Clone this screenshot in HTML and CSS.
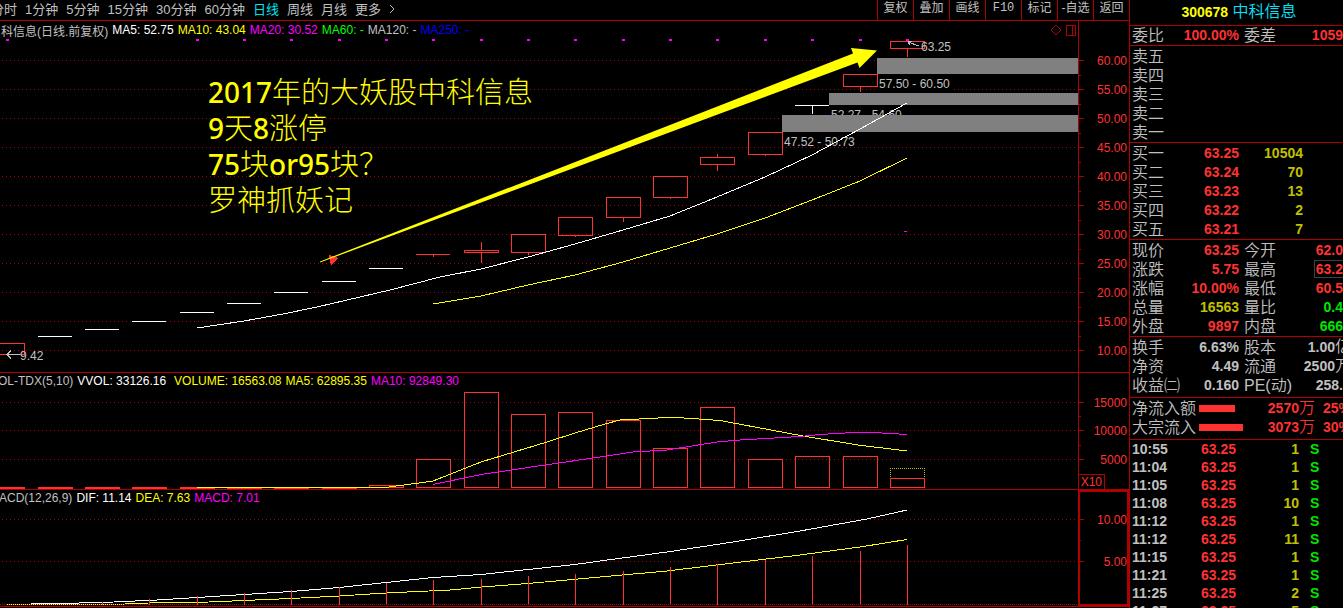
FILE: index.html
```html
<!DOCTYPE html>
<html lang="zh-CN">
<head>
<meta charset="utf-8">
<title>300678 中科信息</title>
<link rel="stylesheet" href="styles.css">
</head>
<body>
<div class="terminal">
  <main class="charts">
    <header class="toolbar">
      <nav class="periods">
        <button>分时</button><button>1分钟</button><button>5分钟</button><button>15分钟</button><button>30分钟</button><button>60分钟</button><button class="active">日线</button><button>周线</button><button>月线</button><button class="more">更多 <svg class="chevron" width="6" height="10"><path d="M1 1l4 4-4 4"/></svg></button>
      </nav>
      <div class="actions">
        <button>复权</button><button>叠加</button><button>画线</button><button class="mono">F10</button><button>标记</button><button>-自选</button><button>返回</button>
      </div>
    </header>

    <section class="pane">
      <div class="plot">
        <div class="legend legend-main">
          <span>科信息(日线.前复权)</span><span class="white">MA5: 52.75</span><span class="yellow">MA10: 43.04</span><span class="magenta">MA20: 30.52</span><span class="green">MA60: -</span><span>MA120: -</span><span class="blue">MA250: -</span>
          <svg class="marks" width="27" height="14"><path d="M1 7l5-5 5 5-5 5z"/><path class="crisp" d="M16.500 2.500h9v10h-9zM22.500 2.500v10"/></svg>
        </div>
        <svg class="canvas" width="100%" height="333">
          <g transform="translate(0 -39)">
            <path class="grid" d="M2 60.500H1078M2 89.500H878M954 89.500H1078M2 118.500H1078M2 147.500H1078M2 176.500H1078M2 205.500H1078M2 234.500H1078M2 263.500H1078M2 292.500H1078M2 321.500H1078M2 350.500H1078"/>
            <path class="flat" d="M38 336.500h34M85 329.500h34M132 321.500h34M180 312.500h34M227 303.500h34M274 292.500h34M322 281.500h34M369 268.500h34M795 105.500h34M812.500 106v8"/>
            <path class="candle" d="M-1 343.500H24.500V354.500H-1M416 254.500h34M433.500 254v3M464.500 250.500h34v2h-34zM481.500 242v8M481.500 253v10M511.500 234.500h34v18h-34zM528.500 253v2M558.500 217.500h34v18h-34zM575.500 236v1M606.500 197.500h34v20h-34zM623.500 218v4M653.500 176.500h34v21h-34zM670.500 198v1M700.500 157.500h34v7h-34zM717.500 154v3M717.500 165v6M748.500 132.500h34v22h-34zM765.500 155v1M843.500 74.500h34v12h-34zM860.500 87v5M890.500 41.500h34v7h-34zM907.500 49v8"/>
            <g class="note">
              <text x="20" y="360">9.42</text>
              <text x="921" y="51">63.25</text>
              <text x="879" y="88">57.50 - 60.50</text>
              <text x="831" y="119">52.27 - 54.60</text>
              <text x="784" y="146">47.52 - 50.73</text>
            </g>
            <path class="pointer" d="M7 354.500H20M11 350.500L7 354.500l4 4M908 42l11 4M912 41l-4 1 2 3"/>
            <path class="gap" d="M877 58H3000V74H877zM829 93H3000V105H829zM782 115H3000V132H782z"/>
            <polyline class="line white" points="197,328 244,321 283,314 317,307 360,297 390,290 440,277 481,269 528,257 575,244 623,230 670,216 717,197 765,177 812,155 860,129 907,103"/>
            <polyline class="line yellow" points="433,304 481,296 528,285 575,275 623,262 670,248 717,234 765,218 812,200 860,181 907,158"/>
            <path class="line magenta" d="M904 231.500h3"/>
            <path class="dots" d="M6 39h3v2h-3zM196 39h3v2h-3zM243 39h3v2h-3zM290 39h3v2h-3zM338 39h3v2h-3zM385 39h3v2h-3zM432 39h3v2h-3zM480 39h3v2h-3zM527 39h3v2h-3zM574 39h3v2h-3zM622 39h3v2h-3zM669 39h3v2h-3zM716 39h3v2h-3zM764 39h3v2h-3zM811 39h3v2h-3zM859 39h3v2h-3zM906 39h3v2h-3z"/>
            <path class="flag" d="M329 255l9 3-7 7z"/>
            <path class="arrow" d="M320 261.500L853 53.500 851 48 877 50.500 859.500 68 857.500 62.500 320 262.500z"/>
          </g>
        </svg>
        <div class="annotation">
          <p><b>2017</b>年的大妖股中科信息</p>
          <p><b>9</b>天<b>8</b>涨停</p>
          <p><b>75</b>块<b>or95</b>块？</p>
          <p>罗神抓妖记</p>
        </div>
      </div>
      <svg class="axis" width="50" height="351">
        <path class="tick" d="M0 39.500h5M0 68.500h5M0 97.500h5M0 126.500h5M0 155.500h5M0 184.500h5M0 213.500h5M0 242.500h5M0 271.500h5M0 300.500h5M0 329.500h5M0 54.500h2M0 83.500h2M0 112.500h2M0 141.500h2M0 170.500h2M0 199.500h2M0 228.500h2M0 257.500h2M0 286.500h2M0 315.500h2"/>
        <g class="scale">
          <text x="48" y="44">60.00</text><text x="48" y="73">55.00</text><text x="48" y="102">50.00</text><text x="48" y="131">45.00</text><text x="48" y="160">40.00</text><text x="48" y="189">35.00</text><text x="48" y="218">30.00</text><text x="48" y="247">25.00</text><text x="48" y="276">20.00</text><text x="48" y="305">15.00</text><text x="48" y="334">10.00</text>
        </g>
      </svg>
    </section>

    <section class="pane">
      <div class="plot">
        <div class="legend legend-volume">
          <span>VOL-TDX(5,10)</span><span class="white wide">VVOL: 33126.16</span><span class="yellow">VOLUME: 16563.08</span><span class="yellow">MA5: 62895.35</span><span class="magenta">MA10: 92849.30</span>
        </div>
        <svg class="canvas" width="100%" height="100">
          <g transform="translate(0 -389)">
            <path class="grid" d="M2 402.500H1078M2 430.500H1078M2 459.500H1078"/>
            <path class="bars" d="M416.500 459.500h34v28h-34zM464.500 392.500h34v95h-34zM511.500 414.500h34v73h-34zM558.500 412.500h34v75h-34zM606.500 420.500h34v67h-34zM653.500 448.500h34v39h-34zM700.500 407.500h34v80h-34zM748.500 459.500h34v28h-34zM795.500 456.500h34v31h-34zM843.500 456.500h34v31h-34zM890.500 478.500h34v9h-34zM369.500 485.500h34v2h-34z"/>
            <path class="stub" d="M0 488H25M38 488h35M85 488h35M132 488h35M180 488h35M227 488h35M274 488h35M322 488h35"/>
            <path class="estimate" d="M890.500 477V468.500H924.500V478"/>
            <polyline class="line yellow" points="197,487.500 385,487.500 415,483.500 433,481 481,462 547,442 575,433 605,424 620,420 658,418 677,417.500 720,420.500 803,436 858,445 907,451"/>
            <polyline class="line magenta" points="433,484.500 481,474.500 545,465 607,456 633,452 667,450 717,442 740,440 800,436.500 820,434.500 853,432.500 873,432.500 907,434.500"/>
          </g>
        </svg>
      </div>
      <svg class="axis" width="50" height="116">
        <path class="tick" d="M0 29.500h5M0 57.500h5M0 86.500h5M0 43.500h2M0 72.500h2M0 101.500H25.500V116"/>
        <g class="scale">
          <text x="48" y="34">15000</text><text x="48" y="62">10000</text><text x="48" y="91">5000</text><text x="23" y="113">X10</text>
        </g>
      </svg>
    </section>

    <section class="pane">
      <div class="plot">
        <div class="legend legend-macd">
          <span>MACD(12,26,9)</span><span class="white">DIF: 11.14</span><span class="yellow">DEA: 7.63</span><span class="magenta">MACD: 7.01</span>
        </div>
        <svg class="canvas" width="100%" height="100">
          <g transform="translate(0 -506)">
            <path class="grid" d="M2 519.500H1078M2 561.500H1078"/>
            <path class="grid zero" d="M0 604.500H1078"/>
            <polyline class="line white" points="31,603.500 79,603 114,602 157,600 197,597.500 244,594.500 291,591.500 339,587.500 386,582.500 433,577.500 481,574.500 528,569.500 575,564.500 600,561 667,552 733,542 800,531 867,519 907,510"/>
            <polyline class="line yellow" points="125,603.500 173,602.500 209,602 244,600.500 291,598.500 339,596 386,593 450,590 482,587 528,583.500 600,577 667,571 733,563 800,555 860,547 907,539.500"/>
            <path class="line yellow lead" d="M7 604.500H125"/>
            <path class="candle" d="M102.500 602v3M149.500 599v6M197.500 596v9M244.500 593v12M291.500 590v15M339.500 587v18M386.500 583v21M433.500 580v25M481.500 579v26M528.500 576v28M575.500 574v31M623.500 571v34M670.500 567v37M717.500 564v41M765.500 560v45M812.500 556v48M860.500 551v53M907.500 545v60"/>
          </g>
        </svg>
      </div>
      <svg class="axis selected" width="50" height="116">
        <path class="tick" d="M0 27.500h4M0 48.500h1M0 69.500h4"/>
        <g class="scale">
          <text x="47" y="32">10.00</text><text x="47" y="74">5.00</text>
        </g>
      </svg>
    </section>
  </main>

  <aside class="quote">
    <h1><b>300678</b> 中科信息</h1>

    <table class="pairs">
      <colgroup><col class="c-label"><col class="c-value"><col class="c-label2"><col></colgroup>
      <tr><th>委比</th><td class="red">100.00%</td><th>委差</th><td class="red">1059</td></tr>
    </table>

    <table class="book">
      <colgroup><col class="c-label"><col class="c-value"><col class="c-volume"><col></colgroup>
      <tr><th>卖五</th><td></td><td></td><td></td></tr>
      <tr><th>卖四</th><td></td><td></td><td></td></tr>
      <tr><th>卖三</th><td></td><td></td><td></td></tr>
      <tr><th>卖二</th><td></td><td></td><td></td></tr>
      <tr><th>卖一</th><td></td><td></td><td></td></tr>
    </table>

    <table class="book">
      <colgroup><col class="c-label"><col class="c-value"><col class="c-volume"><col></colgroup>
      <tr><th>买一</th><td class="red">63.25</td><td class="gold">10504</td><td></td></tr>
      <tr><th>买二</th><td class="red">63.24</td><td class="gold">70</td><td></td></tr>
      <tr><th>买三</th><td class="red">63.23</td><td class="gold">13</td><td></td></tr>
      <tr><th>买四</th><td class="red">63.22</td><td class="gold">2</td><td></td></tr>
      <tr><th>买五</th><td class="red">63.21</td><td class="gold">7</td><td></td></tr>
    </table>

    <table class="pairs">
      <colgroup><col class="c-label"><col class="c-value"><col class="c-label2"><col></colgroup>
      <tr><th>现价</th><td class="red">63.25</td><th>今开</th><td class="red">62.0</td></tr>
      <tr><th>涨跌</th><td class="red">5.75</td><th>最高</th><td class="red"><span class="boxed">63.2</span></td></tr>
      <tr><th>涨幅</th><td class="red">10.00%</td><th>最低</th><td class="red">60.5</td></tr>
      <tr><th>总量</th><td class="gold">16563</td><th>量比</th><td class="lime">0.4</td></tr>
      <tr><th>外盘</th><td class="red">9897</td><th>内盘</th><td class="lime">666</td></tr>
    </table>

    <table class="pairs shares">
      <colgroup><col class="c-label"><col class="c-value"><col class="c-label2"><col></colgroup>
      <tr><th>换手</th><td>6.63%</td><th>股本</th><td><span class="cut">1.00<i>亿</i></span></td></tr>
      <tr><th>净资</th><td>4.49</td><th>流通</th><td><span class="cut">2500<i>万</i></span></td></tr>
      <tr><th>收益㈡</th><td>0.160</td><th>PE(动)</th><td>258.</td></tr>
    </table>

    <table class="flows">
      <colgroup><col class="c-flow"><col class="c-bar"><col class="c-amount"><col></colgroup>
      <tr><th>净流入额</th><td><div class="bar" style="width:36px"></div></td><td class="red">2570<i>万</i></td><td class="red"><span class="cut">25%</span></td></tr>
      <tr><th>大宗流入</th><td><div class="bar" style="width:44px"></div></td><td class="red">3073<i>万</i></td><td class="red"><span class="cut">30%</span></td></tr>
    </table>

    <table class="trades">
      <colgroup><col class="c-time"><col class="c-price"><col class="c-lots"><col></colgroup>
      <tr><th>10:55</th><td class="red">63.25</td><td class="gold">1</td><td class="side">S</td></tr>
      <tr><th>11:04</th><td class="red">63.25</td><td class="gold">1</td><td class="side">S</td></tr>
      <tr><th>11:05</th><td class="red">63.25</td><td class="gold">1</td><td class="side">S</td></tr>
      <tr><th>11:08</th><td class="red">63.25</td><td class="gold">10</td><td class="side">S</td></tr>
      <tr><th>11:12</th><td class="red">63.25</td><td class="gold">1</td><td class="side">S</td></tr>
      <tr><th>11:12</th><td class="red">63.25</td><td class="gold">11</td><td class="side">S</td></tr>
      <tr><th>11:15</th><td class="red">63.25</td><td class="gold">1</td><td class="side">S</td></tr>
      <tr><th>11:21</th><td class="red">63.25</td><td class="gold">1</td><td class="side">S</td></tr>
      <tr><th>11:25</th><td class="red">63.25</td><td class="gold">2</td><td class="side">S</td></tr>
      <tr><th>11:27</th><td class="red">63.25</td><td class="gold">5</td><td class="side">S</td></tr>
    </table>
  </aside>
</div>
</body>
</html>
```
FILE: styles.css
```css
:root {
  --rule: #b00000;
  --red: #ff3232;
  --grey: #c0c0c0;
  --yellow: #ffff00;
  --magenta: #ff00ff;
}

* { box-sizing: border-box; margin: 0; padding: 0; }

body {
  background: #000;
  color: var(--grey);
  font-family: "Liberation Sans", "Noto Sans CJK SC", sans-serif;
  font-size: 12px;
  overflow: hidden;
}

.terminal {
  display: grid;
  grid-template-columns: minmax(0, 1fr) 214px;
  height: 100vh;
  overflow: hidden;
}

button {
  background: none;
  border: 0;
  color: inherit;
  font: inherit;
  white-space: nowrap;
}

/* Toolbar */
.toolbar {
  display: flex;
  justify-content: space-between;
  height: 21px;
  border-bottom: 1px solid var(--rule);
  overflow: hidden;
}
.periods {
  display: flex;
  align-items: center;
  gap: 8px;
  margin-left: -9px;
  padding-bottom: 3px;
  font-size: 13px;
}
.periods .active { color: #00e5ee; }
.more { display: flex; align-items: center; gap: 8px; }
.chevron { fill: none; stroke: var(--grey); }
.actions { display: flex; }
.actions button {
  width: 36px;
  padding-bottom: 3px;
  border-left: 1px solid var(--rule);
  line-height: 17px;
  text-align: center;
}
.actions .mono { font-family: "Liberation Mono", monospace; }

/* Panes */
.charts { min-width: 0; }
.pane {
  display: grid;
  grid-template-columns: minmax(0, 1fr) auto;
  border-bottom: 1px solid var(--rule);
}
.plot { position: relative; min-width: 0; overflow: hidden; }
.legend {
  display: flex;
  align-items: center;
  gap: 4px;
  height: 16px;
  white-space: nowrap;
}
.legend-main { height: 18px; padding: 0 1px; }
.legend-volume { margin-left: -10px; }
.legend-macd { margin-left: -11px; }
.legend .wide { margin-right: 4px; }
.marks { margin-left: auto; fill: none; stroke: var(--rule); }
.crisp { shape-rendering: crispEdges; }

.white { color: #fff; }
.yellow { color: var(--yellow); }
.magenta { color: var(--magenta); }
.green { color: #00ff00; }
.blue { color: #0000ff; }

.canvas, .axis { display: block; overflow: hidden; }
.canvas path, .canvas polyline, .tick { fill: none; shape-rendering: crispEdges; }
.canvas .grid { stroke: var(--rule); stroke-dasharray: 1 3; }
.canvas .zero { stroke-dasharray: 1 1; }
.canvas .flat { stroke: #fff; }
.canvas .candle, .canvas .bars { stroke: var(--red); }
.canvas .stub { stroke: var(--red); stroke-width: 2; }
.canvas .estimate { stroke: #c0c000; stroke-dasharray: 1 1; }
.canvas .line { stroke: currentColor; }
.canvas .lead { stroke-dasharray: 1 1; }
.canvas .pointer { stroke: var(--grey); }
.canvas .gap { fill: #808080; }
.canvas .dots { fill: var(--magenta); }
.canvas .flag { fill: var(--red); }
.canvas .arrow { fill: var(--yellow); shape-rendering: auto; }
.note text { fill: var(--grey); }

.axis {
  box-sizing: content-box;
  border-left: 1px solid var(--rule);
}
.axis.selected {
  box-sizing: border-box;
  width: 51px;
  border: 2px solid var(--rule);
}
.tick { stroke: var(--rule); }
.scale text { fill: var(--red); text-anchor: end; }

.annotation {
  position: absolute;
  left: 208px;
  top: 51px;
  color: var(--yellow);
  font-family: "Noto Sans CJK SC", sans-serif;
  font-size: 29px;
  font-weight: 300;
  line-height: 36px;
  white-space: nowrap;
}
.annotation p { height: 36px; }
.annotation b {
  font-family: "Noto Sans", sans-serif;
  font-size: 28px;
  font-weight: 500;
  line-height: 20px;
}

/* Quote panel */
.quote {
  border-left: 1px solid var(--rule);
  overflow: hidden;
  font-size: 14px;
  font-weight: 700;
}
.quote h1 {
  height: 25px;
  padding-left: 5px;
  color: #00e5ff;
  font-size: 16px;
  font-weight: 350;
  line-height: 24px;
  text-align: center;
}
.quote h1 b { color: var(--yellow); font-size: 14px; font-weight: 700; }
.quote table {
  width: 100%;
  table-layout: fixed;
  border-collapse: separate;
  border-spacing: 0;
  border-top: 1px solid var(--rule);
  padding: 1px 0 0;
}
.quote tr { height: 19px; }
.quote th {
  padding-left: 2px;
  font-size: 16px;
  font-weight: 350;
  line-height: 19px;
  text-align: left;
  white-space: nowrap;
}
.quote td { line-height: 19px; text-align: right; white-space: nowrap; }
.quote td + th { padding-left: 5px; }
.quote i { font-size: 16px; font-style: normal; font-weight: 350; line-height: 16px; }
.quote .pairs:first-of-type { padding: 0; }
.quote .shares, .quote .flows { padding-bottom: 2px; }

.c-label { width: 52px; }
.c-value { width: 57px; }
.c-label2 { width: 48px; }
.c-volume { width: 64px; }
.c-flow { width: 69px; }
.c-bar { width: 45px; }
.c-amount { width: 71px; }
.c-time { width: 52px; }
.c-price { width: 54px; }
.c-lots { width: 63px; }

.red { color: var(--red); }
.gold { color: #c0c000; }
.lime { color: #00e600; }
.cut { margin-right: -8px; }
.boxed { display: inline-block; height: 18px; padding-left: 1px; border: 1px solid #404040; border-right: 0; line-height: 16px; vertical-align: top; }
.bar { height: 7px; background: var(--red); }

.quote .trades { padding-top: 0; }
.trades tr { height: 18px; }
.quote .trades th, .quote .trades td { line-height: 18px; }
.quote .trades th { padding-left: 2px; font-size: 14px; font-weight: 700; }
.quote .trades .side { padding-left: 11px; color: #00e600; text-align: left; }
```
